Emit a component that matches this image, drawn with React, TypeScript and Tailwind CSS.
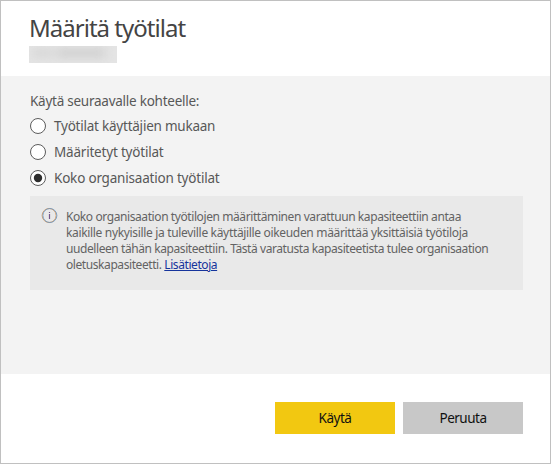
const options = [
  { label: 'Työtilat käyttäjien mukaan', checked: false, tracking: 'tracking-[-0.23px]' },
  { label: 'Määritetyt työtilat', checked: false, tracking: 'tracking-[-0.2px]' },
  { label: 'Koko organisaation työtilat', checked: true, tracking: 'tracking-[-0.2px]' },
];

function Radio({ checked }: { checked: boolean }) {
  return (
    <svg className="h-4 w-4 shrink-0" viewBox="0 0 16 16">
      <circle cx="8" cy="8" r="7.5" fill="#fff" stroke="#5c5c5c" />
      {checked && <circle cx="8" cy="8" r="4.2" fill="#2d2d2d" />}
    </svg>
  );
}

function InfoIcon() {
  return (
    <svg className="mt-3 h-[15px] w-[15px] shrink-0 overflow-visible" viewBox="0 0 15 15" fill="none">
      <circle cx="7.1" cy="7.5" r="7" stroke="#d99a5e" strokeWidth="0.9" />
      <circle cx="7.9" cy="7.5" r="7" stroke="#5b8fc4" strokeWidth="0.9" strokeOpacity="0.85" />
      <path d="M7.5 6v5M7.5 4v1" stroke="#76558b" strokeWidth="1.2" />
    </svg>
  );
}

export default function App() {
  return (
    <div className="flex h-[464px] w-[551px] flex-col border border-[#c0c0c0] bg-white font-['Noto_Sans','Open_Sans',sans-serif] text-[#585858]">
      <header className="flex h-[75px] shrink-0 flex-col items-start pl-7 pt-3">
        <h1 className="h-[33px] whitespace-nowrap text-[24px] leading-[30px] tracking-[-0.98px] text-[#444]">
          <span>Määritä työtilat</span>
        </h1>
        <div className="h-[17px] w-[88px] overflow-hidden bg-[#e4e4e4]">
          <div className="ml-1 mt-0.5 flex h-2.5 items-center gap-1 blur-[5px]">
            <div className="h-1.5 w-5 bg-[#d2d2d2]" />
            <div className="h-2 w-12 bg-[#cecece]" />
          </div>
        </div>
      </header>
      <main className="h-[298px] shrink-0 bg-[#f3f3f3] pl-[29px] pr-[27px] pt-4">
        <p className="h-[21px] whitespace-nowrap text-[13.5px] leading-[19px] tracking-[-0.25px]">
          <span>Käytä seuraavalle kohteelle:</span>
        </p>
        <div className="flex flex-col">
          {options.map((o) => (
            <label key={o.label} className="flex h-[26px] items-center gap-2">
              <Radio checked={o.checked} />
              <span className={`whitespace-nowrap text-[13.5px] leading-5 ${o.tracking}`}>{o.label}</span>
            </label>
          ))}
        </div>
        <section className="mt-[5px] flex h-[94px] gap-[9px] bg-[#e9e9e9] pl-3 text-[#636363]">
          <InfoIcon />
          <div className="flex flex-col items-start whitespace-nowrap pt-[13px] text-[12px] leading-4">
            <span className="tracking-[-0.41px]">Koko organisaation työtilojen määrittäminen varattuun kapasiteettiin antaa</span>
            <span className="tracking-[-0.33px]">kaikille nykyisille ja tuleville käyttäjille oikeuden määrittää yksittäisiä työtiloja</span>
            <span className="tracking-[-0.42px]">uudelleen tähän kapasiteettiin. Tästä varatusta kapasiteetista tulee organisaation</span>
            <span className="tracking-[-0.42px]">
              oletuskapasiteetti. <a href="#" className="text-[#16349c] underline">Lisätietoja</a>
            </span>
          </div>
        </section>
      </main>
      <footer className="flex justify-end gap-2 pr-[27px] pt-7 text-[13.5px] leading-5 tracking-[-0.5px] text-[#111]">
        <button className="h-8 w-[120px] bg-[#f2c811]">Käytä</button>
        <button className="h-8 w-[120px] bg-[#c8c8c8]">Peruuta</button>
      </footer>
    </div>
  );
}
